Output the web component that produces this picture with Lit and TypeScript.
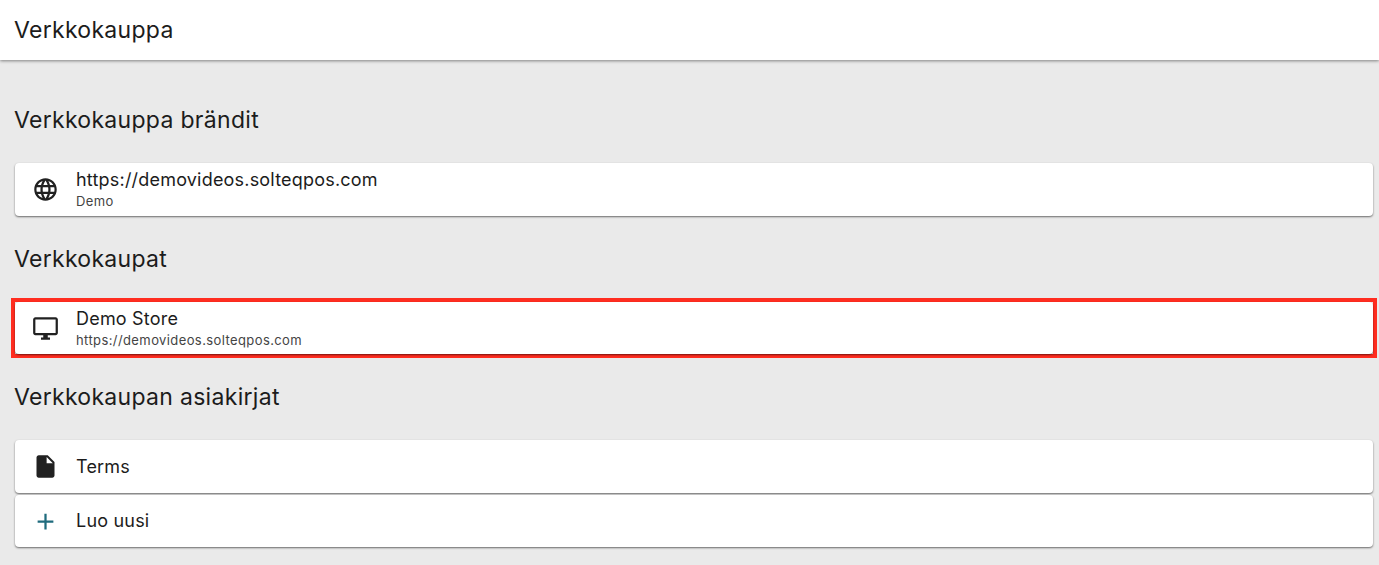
import { LitElement, html, css, svg } from "lit";
import { customElement } from "lit/decorators.js";

const ICONS = {
  globe: svg`<path d="M11.99 2C6.47 2 2 6.48 2 12s4.47 10 9.99 10C17.52 22 22 17.52 22 12S17.52 2 11.99 2zm6.93 6h-2.95c-.32-1.25-.78-2.45-1.38-3.56 1.84.63 3.37 1.91 4.33 3.56zM12 4.04c.83 1.2 1.48 2.53 1.91 3.96h-3.82c.43-1.43 1.08-2.76 1.91-3.96zM4.26 14C4.1 13.36 4 12.69 4 12s.1-1.36.26-2h3.38c-.08.66-.14 1.32-.14 2 0 .68.06 1.34.14 2H4.26zm.82 2h2.95c.32 1.25.78 2.45 1.38 3.56-1.84-.63-3.37-1.9-4.33-3.56zm2.95-8H5.08c.96-1.66 2.49-2.93 4.33-3.56C8.81 5.55 8.35 6.75 8.03 8zM12 19.96c-.83-1.2-1.48-2.53-1.91-3.96h3.82c-.43 1.43-1.08 2.76-1.91 3.96zM14.34 14H9.66c-.09-.66-.16-1.32-.16-2 0-.68.07-1.35.16-2h4.68c.09.65.16 1.32.16 2 0 .68-.07 1.34-.16 2zm.25 5.56c.6-1.11 1.06-2.31 1.38-3.56h2.95c-.96 1.65-2.49 2.93-4.33 3.56zM16.36 14c.08-.66.14-1.32.14-2 0-.68-.06-1.34-.14-2h3.38c.16.64.26 1.31.26 2s-.1 1.36-.26 2h-3.38z"/>`,
  monitor: svg`<path d="M21 2H3c-1.1 0-2 .9-2 2v12c0 1.1.9 2 2 2h7v2H8v2h8v-2h-2v-2h7c1.1 0 2-.9 2-2V4c0-1.1-.9-2-2-2zm0 14H3V4h18v12z"/>`,
  file: svg`<path d="M6 2c-1.1 0-1.99.9-1.99 2L4 20c0 1.1.89 2 1.99 2H18c1.1 0 2-.9 2-2V8l-6-6H6zm7 7V3.5L18.5 9H13z"/>`,
  plus: svg`<path d="M19 13h-6v6h-2v-6H5v-2h6V5h2v6h6v2z"/>`,
};
type IconName = keyof typeof ICONS;

@customElement("app-root")
export class AppRoot extends LitElement {
  static styles = css`
    :host {
      display: block;
      min-height: 565px;
      background: #eaeaea;
      color: #1c1c1c;
      font-family: Inter, "Liberation Sans", sans-serif;
      overflow: hidden;
    }
    .bar {
      height: 60px;
      background: #fff;
      box-shadow: 0 1px 3px rgba(0, 0, 0, 0.45);
      display: flex;
      align-items: center;
      padding: 0 14px;
      font-size: 23px;
      font-weight: 400;
      letter-spacing: 0.3px;
    }
    .content {
      display: flex;
      flex-direction: column;
      padding: 17px 6px 0 15px;
    }
    .heading {
      height: 86px;
      display: flex;
      align-items: center;
      font-size: 23px;
      font-weight: 400;
      letter-spacing: 0.3px;
      margin: 0 0 0 -1px;
      box-sizing: border-box;
    }
    .card {
      height: 53px;
      background: #fff;
      border-radius: 4px;
      box-shadow: 0 1px 2px rgba(0, 0, 0, 0.55);
      display: flex;
      align-items: center;
      padding-left: 17px;
      gap: 17px;
      box-sizing: border-box;
    }
    .card + .card {
      margin-top: 2px;
      height: 52px;
    }
    .focus {
      border: 4px solid #ff2d20;
      margin: -4px;
    }
    .focus .card {
      height: 52px;
    }
    .icon {
      width: 27px;
      height: 27px;
      flex: none;
      fill: #212121;
    }
    .plus {
      fill: #1f6b7d;
    }
    .text {
      display: flex;
      flex-direction: column;
    }
    .title {
      font-size: 18px;
      line-height: 22px;
      font-weight: 400;
      letter-spacing: 0.2px;
    }
    .sub {
      font-size: 13px;
      line-height: 17px;
      margin-top: 2px;
      color: #444;
      letter-spacing: 0.4px;
    }
  `;

  private row(icon: IconName, title: string, sub?: string) {
    return html`<div class="card">
      <svg class="icon ${icon === "plus" ? "plus" : ""}" viewBox="0 0 24 24">${ICONS[icon]}</svg>
      <div class="text">
        <span class="title">${title}</span>
        ${sub ? html`<span class="sub">${sub}</span>` : ""}
      </div>
    </div>`;
  }

  render() {
    return html`
      <header class="bar">Verkkokauppa</header>
      <main class="content">
        <h2 class="heading">Verkkokauppa brändit</h2>
        ${this.row("globe", "https://demovideos.solteqpos.com", "Demo")}
        <h2 class="heading">Verkkokaupat</h2>
        <div class="focus">${this.row("monitor", "Demo Store", "https://demovideos.solteqpos.com")}</div>
        <h2 class="heading">Verkkokaupan asiakirjat</h2>
        ${this.row("file", "Terms")}
        ${this.row("plus", "Luo uusi")}
      </main>
    `;
  }
}
